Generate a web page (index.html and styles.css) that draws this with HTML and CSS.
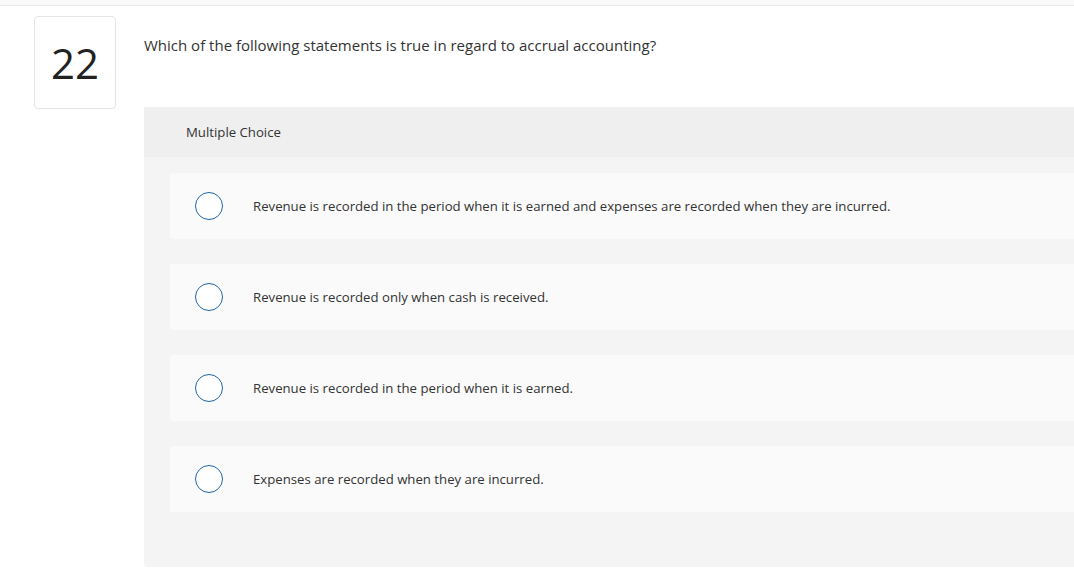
FILE: index.html
```html
<!DOCTYPE html>
<html>
<head>
<meta charset="utf-8">
<link rel="stylesheet" href="styles.css">
</head>
<body>
<div class="topbar"></div>
<div class="question">
  <div class="qnum">22</div>
  <div class="qmain">
    <p class="prompt">Which of the following statements is true in regard to accrual accounting?</p>
    <div class="panel">
      <div class="panel-head">Multiple Choice</div>
      <div class="panel-body">
        <div class="option"><span class="radio"></span><span class="label">Revenue is recorded in the period when it is earned and expenses are recorded when they are incurred.</span></div>
        <div class="option"><span class="radio"></span><span class="label">Revenue is recorded only when cash is received.</span></div>
        <div class="option"><span class="radio"></span><span class="label">Revenue is recorded in the period when it is earned.</span></div>
        <div class="option"><span class="radio"></span><span class="label">Expenses are recorded when they are incurred.</span></div>
      </div>
    </div>
  </div>
</div>
</body>
</html>
```

FILE: styles.css
```css
html, body {
  margin: 0;
  padding: 0;
  background: #fff;
  font-family: "Open Sans", Arial, sans-serif;
  color: #333;
  overflow: hidden;
}
.topbar {
  height: 5px;
  background: #fafafa;
  border-bottom: 1px solid #e9e9e9;
}
.question {
  display: flex;
  padding-top: 10px;
  padding-left: 34px;
}
.qnum {
  width: 80px;
  height: 91px;
  border: 1px solid #e4e4e4;
  border-radius: 4px;
  display: flex;
  align-items: center;
  justify-content: center;
  font-size: 42px;
  font-weight: 400;
  color: #222;
  flex-shrink: 0;
  box-sizing: content-box;
}
.qmain {
  margin-left: 28px;
  flex: 1;
  min-width: 0;
}
.prompt {
  margin: 20px 0 0 0;
  font-size: 15px;
  line-height: 18px;
  color: #333;
}
.panel {
  margin-top: 53px;
  background: #f4f4f4;
  border-radius: 4px 0 0 4px;
  margin-right: -10px;
}
.panel-head {
  height: 50px;
  background: #efefef;
  display: flex;
  align-items: center;
  padding-left: 42px;
  font-size: 13.2px;
  color: #333;
}
.panel-body {
  padding: 16px 0 55px 26px;
  display: flex;
  flex-direction: column;
  gap: 25px;
}
.option {
  height: 66px;
  background: #fafafa;
  border-radius: 3px 0 0 3px;
  display: flex;
  align-items: center;
  padding-left: 25px;
}
.radio {
  width: 26px;
  height: 26px;
  border: 1.5px solid #1d65a6;
  border-radius: 50%;
  background: #fff;
  flex-shrink: 0;
}
.label {
  margin-left: 30px;
  font-size: 13.2px;
  color: #333;
}
```
